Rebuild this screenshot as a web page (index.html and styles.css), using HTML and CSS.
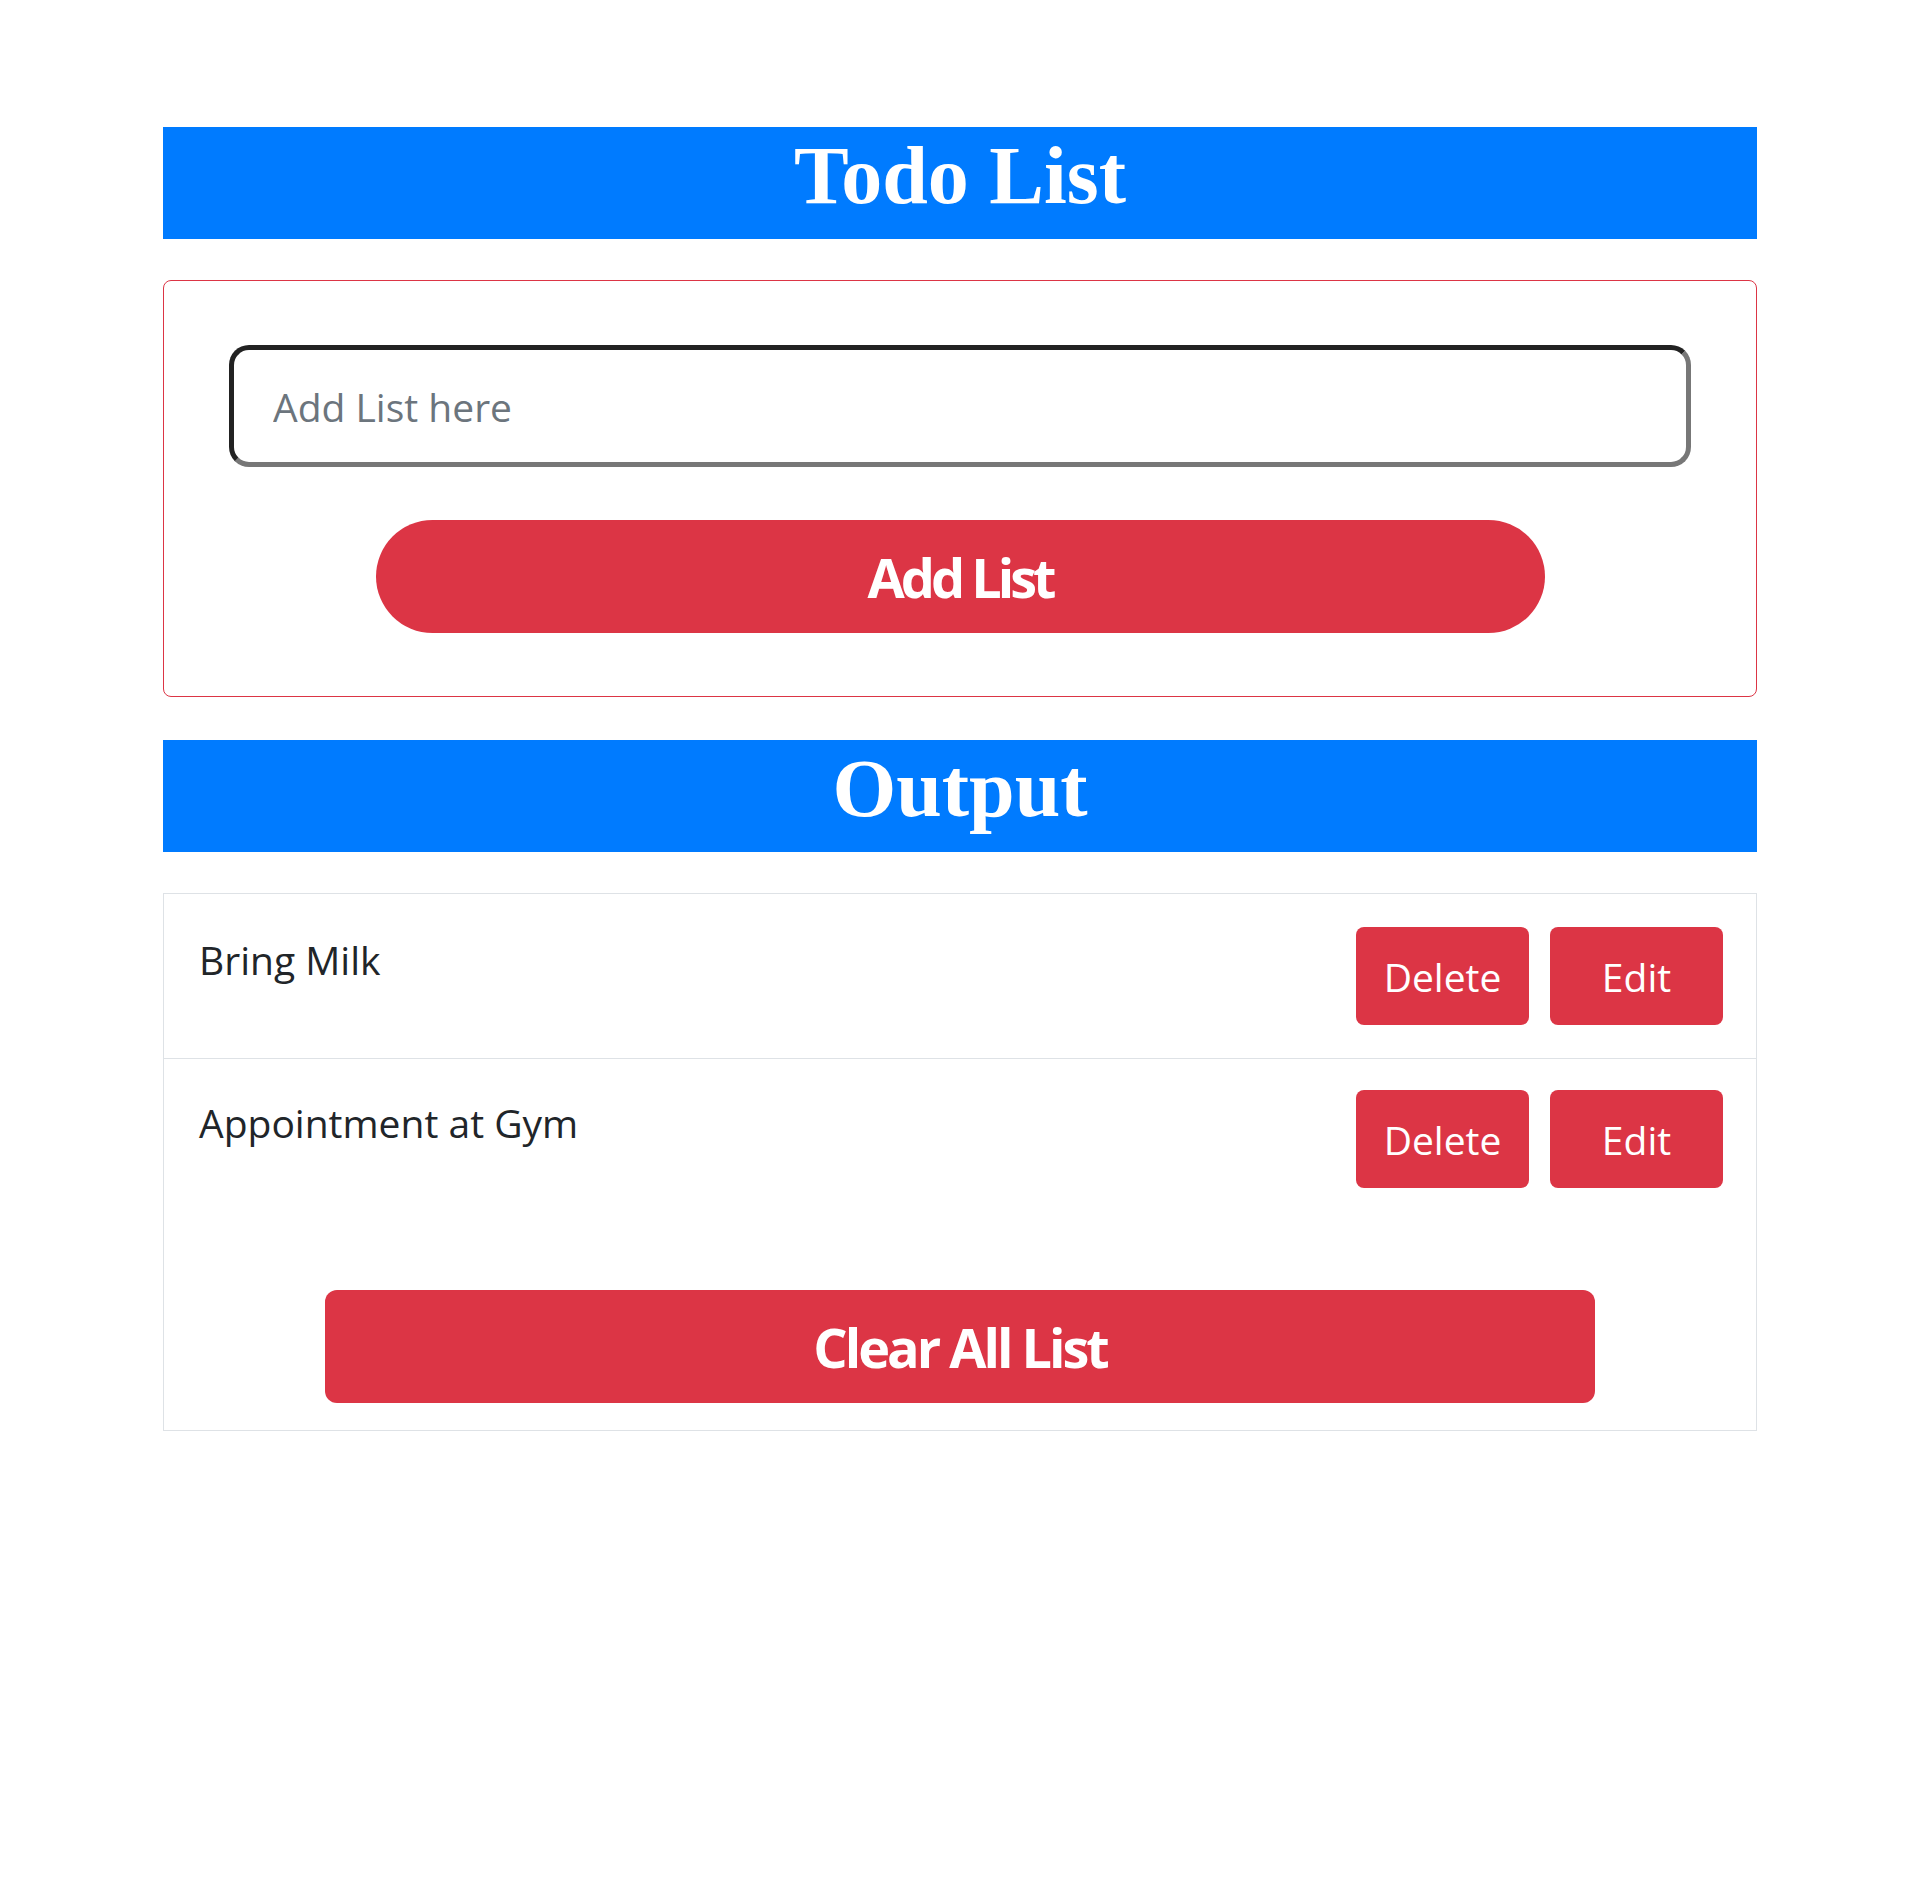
FILE: index.html
```html
<!DOCTYPE html>
<html lang="en">
<head>
<meta charset="utf-8">
<title>Todo List</title>
<link rel="stylesheet" href="styles.css">
</head>
<body>
<div class="container">
  <h1 class="banner">Todo List</h1>
  <div class="add-card">
    <input class="add-input" type="text" placeholder="Add List here">
    <button class="add-btn">Add List</button>
  </div>
  <h1 class="banner banner-output">Output</h1>
  <div class="list">
    <div class="row">
      <span class="row-text">Bring Milk</span>
      <div class="row-actions">
        <button class="btn">Delete</button>
        <button class="btn">Edit</button>
      </div>
    </div>
    <div class="row">
      <span class="row-text">Appointment at Gym</span>
      <div class="row-actions">
        <button class="btn">Delete</button>
        <button class="btn">Edit</button>
      </div>
    </div>
    <div class="clear-wrap">
      <button class="clear-btn">Clear All List</button>
    </div>
  </div>
</div>
</body>
</html>
```
FILE: styles.css
```css
html, body {
  margin: 0;
  padding: 0;
  background: #ffffff;
}

body {
  font-family: "Open Sans", "Noto Sans", sans-serif;
  color: #212529;
}

.container {
  width: 1594px;
  margin: 127px auto 0;
}

.banner {
  margin: 0;
  height: 112px;
  box-sizing: border-box;
  padding-bottom: 14px;
  line-height: 98px;
  background: #007bff;
  color: #ffffff;
  text-align: center;
  font-family: "Liberation Serif", "Times New Roman", serif;
  font-weight: bold;
  font-size: 82px;
}

.banner-output {
  margin-top: 43px;
}

.add-card {
  margin-top: 41px;
  border: 1px solid #dc3545;
  border-radius: 8px;
  padding: 64px 65px 63px;
  display: flex;
  flex-direction: column;
  align-items: center;
  gap: 53px;
}

.add-input {
  box-sizing: border-box;
  width: 100%;
  height: 122px;
  border: 5px solid;
  border-color: #222222 #777777 #777777 #222222;
  border-radius: 20px;
  padding: 0 39px;
  font-family: "Open Sans", "Noto Sans", sans-serif;
  font-size: 39px;
  color: #212529;
  outline: none;
}

.add-input::placeholder {
  color: #6c757d;
}

.add-btn {
  width: 1169px;
  height: 113px;
  border: none;
  border-radius: 57px;
  background: #dc3545;
  color: #ffffff;
  font-family: "Open Sans", "Noto Sans", sans-serif;
  font-weight: bold;
  font-size: 54px;
  letter-spacing: -4px;
  cursor: pointer;
}

.list {
  margin-top: 41px;
  border: 1px solid #dee2e6;
  padding-bottom: 27px;
}

.row {
  display: flex;
  justify-content: space-between;
  align-items: flex-start;
  padding: 33px 33px 33px 35px;
}

.row + .row {
  border-top: 1px solid #dee2e6;
  padding-top: 31px;
}

.row-text {
  font-size: 39px;
  line-height: 60px;
  padding-top: 3px;
}

.row-actions {
  display: flex;
  gap: 21px;
}

.btn {
  width: 173px;
  height: 98px;
  border: none;
  border-radius: 8px;
  background: #dc3545;
  color: #ffffff;
  font-family: "Open Sans", "Noto Sans", sans-serif;
  font-size: 39px;
  padding: 0;
  cursor: pointer;
}

.clear-wrap {
  display: flex;
  justify-content: center;
  padding-top: 69px;
}

.clear-btn {
  width: 1270px;
  height: 113px;
  border: none;
  border-radius: 12px;
  background: #dc3545;
  color: #ffffff;
  font-family: "Open Sans", "Noto Sans", sans-serif;
  font-weight: bold;
  font-size: 54px;
  letter-spacing: -3px;
  cursor: pointer;
}
```
